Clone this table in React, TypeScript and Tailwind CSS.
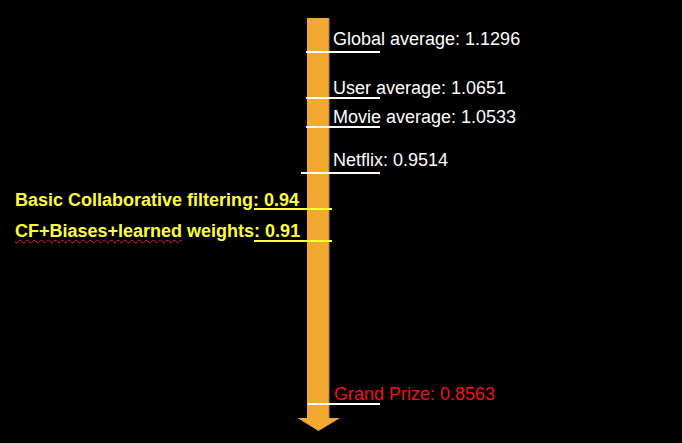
export default function App() {
  const labels = [
    { text: 'Global average: 1.1296', top: 'top-[30px]', left: 'left-[333px]' },
    { text: 'User average: 1.0651', top: 'top-[79px]', left: 'left-[333px]' },
    { text: 'Movie average: 1.0533', top: 'top-[108px]', left: 'left-[333px]' },
    { text: 'Netflix: 0.9514', top: 'top-[151px]', left: 'left-[333px]' },
  ]

  const ticks = [
    'top-[51px] left-[306px] w-[74px]',
    'top-[97px] left-[306px] w-[74px]',
    'top-[126px] left-[306px] w-[74px]',
    'top-[172px] left-[301px] w-[79px]',
    'top-[403px] left-[308px] w-[72px]',
  ]

  return (
    <div className="relative h-[443px] w-[682px] overflow-hidden bg-black font-['Liberation_Sans',Arial,sans-serif]">
      {/* arrow */}
      <svg className="absolute left-0 top-0" width="682" height="443" viewBox="0 0 682 443">
        <rect x="307" y="18" width="22" height="401" fill="#F2A931" />
        <rect x="328.5" y="18" width="1" height="401" fill="#B8802A" />
        <polygon points="297.5,418 340,418 318.5,431" fill="#F2A931" />
      </svg>

      {/* right-side markers */}
      {ticks.map(t => (
        <div key={t} className={`absolute h-[2px] bg-white ${t}`} />
      ))}
      {labels.map(l => (
        <div
          key={l.text}
          className={`absolute whitespace-nowrap text-[18px] leading-[18px] text-white ${l.top} ${l.left}`}
        >
          {l.text}
        </div>
      ))}
      <div className="absolute left-[334px] top-[385px] whitespace-nowrap text-[18px] leading-[18px] text-[#F0101C]">
        Grand Prize: 0.8563
      </div>

      {/* left-side markers */}
      <div className="absolute left-[254px] top-[208px] h-[2px] w-[78px] bg-[#FFFF33]" />
      <div className="absolute left-[254px] top-[240px] h-[2px] w-[78px] bg-[#FFFF33]" />
      <div className="absolute left-[15px] top-[191px] whitespace-nowrap text-[18px] font-bold leading-[18px] text-[#FFFF33]">
        Basic Collaborative filtering: 0.94
      </div>
      <div className="absolute left-[15px] top-[222px] whitespace-nowrap text-[18px] font-bold leading-[18px] text-[#FFFF33]">
        <span className="underline decoration-wavy decoration-[#E0202A] decoration-1 underline-offset-2">
          CF+Biases+learned
        </span>{' '}
        weights: 0.91
      </div>
    </div>
  )
}
